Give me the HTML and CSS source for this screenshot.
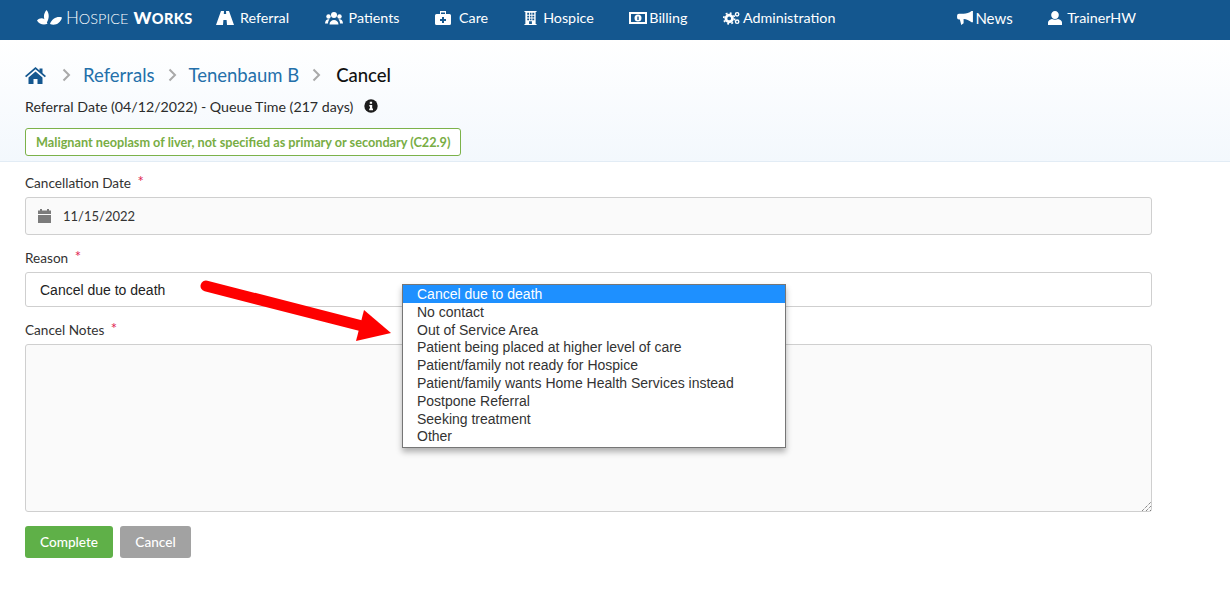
FILE: index.html
```html
<!DOCTYPE html>
<html lang="en">
<head>
<meta charset="utf-8">
<title>Cancel Referral</title>
<link rel="stylesheet" href="styles.css">
</head>
<body>
<header class="topbar">
  <div class="brand">
    <svg class="brand-mark" viewBox="0 0 25 15" width="25" height="15"><path d="M9.500 0c2.800 3 3 8 .4 12.500C6 9.500 6 4 9.500 0zM0 10.500c3-3.500 8-3.500 10.500 3.300C7 15.500 2 14.500 0 10.500zM25 7.500c-1.500 6-7 8.500-12 6.500 2-6 7.500-8 12-6.500z" fill="#fff"/></svg>
    <span class="brand-light">H<small>OSPICE</small></span>
    <span class="brand-bold">W<small>ORKS</small></span>
  </div>
  <nav class="nav">
    <a class="nav-item"><svg class="ico i-road" viewBox="0 0 18 14"><path d="M5 0h3l-.2 3h2.400L10 0h3l5 14h-7l-.4-5H7.400L7 14H0z" fill="#fff"/></svg>Referral</a>
    <a class="nav-item"><svg class="ico i-road" viewBox="0 0 18 13"><g fill="#fff"><circle cx="9" cy="3.500" r="3"/><circle cx="3.500" cy="5" r="2.200"/><circle cx="14.500" cy="5" r="2.200"/><path d="M4.500 13c0-6 9-6 9 0zM0 12c0-4 3-5 4.500-4-1 1-1.500 2.500-1.500 4zM18 12c0-4-3-5-4.500-4 1 1 1.500 2.500 1.500 4z"/></g></svg>Patients</a>
    <a class="nav-item"><svg class="ico i-care" viewBox="0 0 16 14"><path fill-rule="evenodd" d="M5 0h6v3h3.500A1.500 1.500 0 0 1 16 4.500v8a1.500 1.500 0 0 1-1.500 1.500h-13A1.500 1.500 0 0 1 0 12.500v-8A1.500 1.500 0 0 1 1.500 3H5zm1 1.500V3h4V1.500zM7 6v2H5v2h2v2h2v-2h2V8H9V6z" fill="#fff"/></svg>Care</a>
    <a class="nav-item"><svg class="ico i-hosp" viewBox="0 0 13 15"><path fill-rule="evenodd" d="M0 0h13v1h-1v13h1v1H0v-1h1V1H0zm3 2v2h2V2zm3 0v2h1.500V2zm2.500 0v2h2V2zM3 5v2h2V5zm3 0v2h1.500V5zm2.500 0v2h2V5zM3 8v2h2V8zm3 0v2h1.500V8zm2.500 0v2h2V8zM5 11v3h3v-3z" fill="#fff"/></svg>Hospice</a>
    <a class="nav-item"><svg class="ico i-tight" viewBox="0 0 18 12"><path fill-rule="evenodd" d="M0 0h18v12H0zm2 2v8h14V2zm7 .500a3.500 3.500 0 1 1 0 7 3.500 3.500 0 0 1 0-7z" fill="#fff"/><path d="M8.300 4.500h1.400v3.500H8.300z" fill="#14578f"/></svg>Billing</a>
    <a class="nav-item"><svg class="ico i-tight" viewBox="0 0 19 15"><g fill="none" stroke="#fff"><circle cx="6.500" cy="8" r="3.500" stroke-width="3"/><circle cx="6.500" cy="8" r="5.800" stroke-width="1.800" stroke-dasharray="2 2.550"/><circle cx="15" cy="3.500" r="1.800" stroke-width="1.500"/><circle cx="15" cy="11.500" r="1.800" stroke-width="1.500"/></g></svg>Administration</a>
  </nav>
  <nav class="nav nav-right">
    <a class="nav-item"><svg class="ico i-news" viewBox="0 0 17 15"><path fill-rule="evenodd" d="M17 0v12h-1.500C13 10 10 8.800 7 8.500V13l-2.500 2L3 9H2a2 2 0 0 1-2-2V5a2 2 0 0 1 2-2h5c3 0 6-1 8.500-3z" fill="#fff"/></svg><span class="news-text">News</span></a>
    <a class="nav-item"><svg class="ico i-user" viewBox="0 0 14 14"><path d="M7 0a3.800 3.800 0 0 1 3.800 4C10.800 6 9.500 8 7 8S3.200 6 3.200 4A3.800 3.800 0 0 1 7 0zM0 14v-2.500C0 9.500 2 8.500 4 8c1.800 1 4.200 1 6 0 2 .5 4 1.500 4 3.500V14z" fill="#fff"/></svg>TrainerHW</a>
  </nav>
</header>

<section class="subhead">
  <div class="crumbs">
    <svg class="home" viewBox="0 0 21 17" width="21" height="17"><path d="M10.500 0l4 3.500V1.500h3v4.600L21 9l-1.200 1.300-9.300-8-9.300 8L0 9zM3.500 10.500l7-6 7 6V17h-5v-5h-4v5h-5z" fill="#14578f"/></svg>
    <svg class="chev" viewBox="0 0 9 14" width="9" height="14"><path d="M1.500 1.500L7 7l-5.500 5.500" fill="none" stroke="#a9a9a9" stroke-width="2"/></svg>
    <a class="crumb-link">Referrals</a>
    <svg class="chev" viewBox="0 0 9 14" width="9" height="14"><path d="M1.500 1.500L7 7l-5.500 5.500" fill="none" stroke="#a9a9a9" stroke-width="2"/></svg>
    <a class="crumb-link">Tenenbaum B</a>
    <svg class="chev" viewBox="0 0 9 14" width="9" height="14"><path d="M1.500 1.500L7 7l-5.500 5.500" fill="none" stroke="#a9a9a9" stroke-width="2"/></svg>
    <span class="crumb-current">Cancel</span>
  </div>
  <div class="meta">
    <span>Referral Date (04/12/2022) - Queue Time (217 days)</span>
    <svg class="info" viewBox="0 0 14 14" width="14" height="14"><circle cx="7" cy="7" r="6.700" fill="#1c1c1c"/><path d="M5.800 2.700h2.300v2H5.800zM5.300 5.900h2.900v3.700h.800v1.600H5.200V9.600H6V7.500h-.7z" fill="#fff"/></svg>
  </div>
  <div class="diagnosis">Malignant neoplasm of liver, not specified as primary or secondary (C22.9)</div>
</section>

<main class="form">
  <div class="field">
    <label class="label">Cancellation Date <span class="req">*</span></label>
    <div class="input date">
      <svg viewBox="0 0 13 14" width="13" height="14"><path d="M2 0h2v1.500h5V0h2v1.500h2V5H0V1.500h2zM0 6h13v8H0z" fill="#7b7b7b"/></svg>
      <span>11/15/2022</span>
    </div>
  </div>
  <div class="field">
    <label class="label">Reason <span class="req">*</span></label>
    <div class="input select">Cancel due to death</div>
  </div>
  <div class="field">
    <label class="label">Cancel Notes <span class="req">*</span></label>
    <div class="textarea">
      <svg class="grip" viewBox="0 0 9 9" width="9" height="9"><path d="M0 9L9 0M4 9l5-5M8 9l1-1" stroke="#555" stroke-width="1" fill="none" stroke-dasharray="1 1"/></svg>
    </div>
  </div>
  <div class="actions">
    <button class="btn btn-green">Complete</button>
    <button class="btn btn-gray">Cancel</button>
  </div>
</main>

<ul class="dropdown">
  <li class="opt active">Cancel due to death</li>
  <li class="opt">No contact</li>
  <li class="opt">Out of Service Area</li>
  <li class="opt">Patient being placed at higher level of care</li>
  <li class="opt">Patient/family not ready for Hospice</li>
  <li class="opt">Patient/family wants Home Health Services instead</li>
  <li class="opt">Postpone Referral</li>
  <li class="opt">Seeking treatment</li>
  <li class="opt">Other</li>
</ul>

<svg class="arrow" viewBox="0 0 200 70" width="200" height="70"><path d="M6 6L170 48" stroke="#fe0000" stroke-width="11" stroke-linecap="round" fill="none"/><path d="M164 30L191 53L156 61z" fill="#fe0000"/></svg>
</body>
</html>
```
FILE: styles.css
```css
* { box-sizing: border-box; }
html, body { margin: 0; padding: 0; }
body {
  font-family: Lato, "Open Sans", sans-serif;
  color: #222;
  background: #fff;
  height: 595px;
  overflow: hidden;
  position: relative;
}
.topbar {
  height: 40px;
  background: #14578f;
  display: flex;
  align-items: center;
  padding: 0 0 5px 37px;
  color: #fff;
}
.brand {
  display: flex;
  align-items: center;
  width: 179px;
  font-size: 17px;
  color: #fff;
  white-space: nowrap;
}
.brand-mark { margin-right: 4px; flex: none; }
.brand-light { color: #fff; margin-right: 5px; font-weight: 300; }
.brand-bold { font-weight: 900; letter-spacing: .4px; }
.brand small { font-size: 14.500px; }
.nav { display: flex; gap: 35.500px; align-items: center; }
.nav-right { margin-left: 122px; }
.nav-item {
  display: flex;
  align-items: center;
  font-size: 14.300px;
  color: #fff;
  white-space: nowrap;
}
.ico { height: 14px; flex: none; }
.i-road { width: 18px; margin-right: 6px; }
.i-care { width: 16px; margin-right: 8px; }
.i-hosp { width: 13px; margin-right: 6.500px; }
.i-tight { width: 18px; margin-right: 2px; }
.i-news { width: 16px; margin-right: 2px; }
.i-user { width: 14px; margin-right: 5px; }
.news-text { font-size: 15px; }
.subhead {
  height: 122px;
  padding: 26px 25px 0;
  background: linear-gradient(#fff 0%, #f3f8fd 100%);
  border-bottom: 1px solid #e2ecf5;
}
.crumbs { display: flex; align-items: center; height: 18px; font-size: 18.500px; }
.home { margin-right: 16px; }
.chev { margin-right: 12px; }
.crumb-link { color: #2470aa; margin-right: 13px; }
.crumb-current { color: #111; font-weight: 500; margin-left: 3px; }
.meta {
  display: flex;
  align-items: center;
  gap: 11px;
  margin-top: 14px;
  height: 16px;
  font-size: 14.200px;
  color: #2b2b2b;
}
.diagnosis {
  display: inline-block;
  margin-top: 14px;
  height: 28px;
  line-height: 26px;
  padding: 0 10px;
  border: 1px solid #7cb24a;
  border-radius: 3px;
  background: #fff;
  color: #78ad44;
  font-size: 12.700px;
  font-weight: 700;
  white-space: nowrap;
}
.form { width: 1127px; margin-left: 25px; padding-top: 13px; }
.field { margin-bottom: 15px; }
.label { display: block; height: 22px; line-height: 14px; font-size: 13.600px; color: #333; }
.req { color: #e0244f; font-size: 15px; margin-left: 3px; position: relative; top: -1px; }
.input {
  border: 1px solid #cfcfcf;
  border-radius: 3px;
  font-size: 14px;
  display: flex;
  align-items: center;
}
.date { height: 38px; background: #fafafa; padding-left: 12px; gap: 12px; color: #333; font-size: 13px; }
.select {
  height: 35px;
  padding-left: 14px;
  background: #fff;
  font-family: "Liberation Sans", sans-serif;
}
.textarea {
  height: 168px;
  border: 1px solid #cfcfcf;
  border-radius: 3px;
  background: #fafafa;
  position: relative;
}
.grip { position: absolute; right: 0; bottom: 0; }
.actions { display: flex; gap: 7px; margin-top: -1px; }
.btn {
  height: 32px;
  border: 0;
  border-radius: 3px;
  color: #fff;
  font: 500 13.600px Lato, sans-serif;
  padding: 0;
}
.btn-green { width: 88px; background: #5fb048; }
.btn-gray { width: 71px; background: #a2a2a2; }
.dropdown {
  position: absolute;
  left: 402px;
  top: 284px;
  width: 384px;
  height: 164px;
  margin: 0;
  padding: 0;
  list-style: none;
  background: #fff;
  border: 1px solid #767676;
  box-shadow: 0 4px 6px rgba(0,0,0,.3);
  font: 14px "Liberation Sans", sans-serif;
  color: #333;
}
.opt { padding-left: 14px; height: 17.800px; line-height: 19.800px; white-space: nowrap; }
.opt.active { background: #1e90ff; color: #fff; }
.arrow { position: absolute; left: 200px; top: 280px; }
```
